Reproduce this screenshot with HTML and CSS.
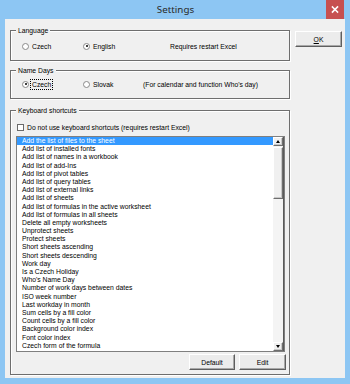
FILE: index.html
```html
<!DOCTYPE html>
<html>
<head>
<meta charset="utf-8">
<link rel="stylesheet" href="styles.css">
</head>
<body>
<div class="window">
  <div class="titlebar">
    <span class="title">Settings</span>
    <div class="close">
      <svg width="18" height="19" viewBox="0 0 18 19"><path d="M6.5 7 L11.5 12 M11.5 7 L6.5 12" stroke="#fff" stroke-width="1.6" stroke-linecap="square"/></svg>
    </div>
  </div>
  <div class="client">
    <div class="main">
      <div class="group g-lang">
        <span class="legend">Language</span>
        <div class="opts">
          <label class="opt w61"><span class="radio"></span><span>Czech</span></label>
          <label class="opt w87"><span class="radio on"></span><span>English</span></label>
          <span class="note">Requires restart Excel</span>
        </div>
      </div>
      <div class="group g-days">
        <span class="legend">Name Days</span>
        <div class="opts">
          <label class="opt w61"><span class="radio on"></span><span class="focus">Czech</span></label>
          <label class="opt w60"><span class="radio"></span><span>Slovak</span></label>
          <span class="note">(For calendar and function Who's day)</span>
        </div>
      </div>
      <div class="group g-keys">
        <span class="legend">Keyboard shortcuts</span>
        <label class="check-row"><span class="check"></span><span>Do not use keyboard shortcuts (requires restart Excel)</span></label>
        <div class="listbox">
          <div class="items">
            <div class="item sel">Add the list of files to the sheet</div>
            <div class="item">Add list of installed fonts</div>
            <div class="item">Add list of names in a workbook</div>
            <div class="item">Add list of add-Ins</div>
            <div class="item">Add list of pivot tables</div>
            <div class="item">Add list of query tables</div>
            <div class="item">Add list of external links</div>
            <div class="item">Add list of sheets</div>
            <div class="item">Add list of formulas in the active worksheet</div>
            <div class="item">Add list of formulas in all sheets</div>
            <div class="item">Delete all empty worksheets</div>
            <div class="item">Unprotect sheets</div>
            <div class="item">Protect sheets</div>
            <div class="item">Short sheets ascending</div>
            <div class="item">Short sheets descending</div>
            <div class="item">Work day</div>
            <div class="item">Is a Czech Holiday</div>
            <div class="item">Who's Name Day</div>
            <div class="item">Number of work days between dates</div>
            <div class="item">ISO week number</div>
            <div class="item">Last workday in month</div>
            <div class="item">Sum cells by a fill color</div>
            <div class="item">Count cells by a fill color</div>
            <div class="item">Background color index</div>
            <div class="item">Font color index</div>
            <div class="item">Czech form of the formula</div>
          </div>
          <div class="scrollbar">
            <div class="sbtn"><span class="arr up"></span></div>
            <div class="thumb"></div>
            <div class="track"></div>
            <div class="sbtn"><span class="arr down"></span></div>
          </div>
        </div>
        <div class="btn-row">
          <button class="btn w46">Default</button>
          <button class="btn w47">Edit</button>
        </div>
      </div>
    </div>
    <div class="side">
      <button class="btn ok w47"><u>O</u>K</button>
    </div>
  </div>
</div>
</body>
</html>
```

FILE: styles.css
```css
* { box-sizing: border-box; }
html, body { margin: 0; padding: 0; }
body {
  width: 350px;
  height: 384px;
  overflow: hidden;
  font-family: "Liberation Sans", Arial, sans-serif;
  font-size: 6.8px;
  color: #000;
}
.window {
  width: 350px;
  height: 384px;
  background: #8dc6f3;
  display: flex;
  flex-direction: column;
}
.titlebar {
  height: 19px;
  display: flex;
  align-items: center;
  justify-content: center;
  position: relative;
}
.title {
  font-family: "Noto Sans", "Open Sans", sans-serif;
  font-size: 9.8px;
  color: #2a2a2a;
  margin-left: 1px;
}
.close {
  position: absolute;
  left: 326px;
  top: 0;
  width: 18px;
  height: 19px;
  background: #c75050;
}
.close svg { display: block; }
.client {
  margin: 0 5px;
  height: 359px;
  background: #f0f0f0;
  display: flex;
}
.main {
  padding-left: 5px;
  width: 285px;
}
.side {
  padding-left: 5px;
  padding-top: 12px;
}
.group {
  position: relative;
  width: 280px;
  border: 1px solid #6e6e6e;
  box-shadow: inset 1px 1px 0 #fff, 1px 1px 0 #fff;
}
.legend {
  position: absolute;
  left: 5px;
  top: -5px;
  padding: 0 2px;
  background: #f0f0f0;
  line-height: 9px;
}
.g-lang { margin-top: 11px; height: 31px; padding: 10px 0 0 11px; }
.g-days { margin-top: 9px; height: 29px; padding: 8px 0 0 11px; }
.g-keys { margin-top: 11px; height: 265px; padding: 12px 0 0 5px; }
.opts {
  display: flex;
  align-items: center;
  height: 10px;
}
.opt {
  display: flex;
  align-items: center;
  flex: none;
}
.w61 { width: 61px; }
.w87 { width: 87px; }
.w60 { width: 60px; }
.w46 { width: 46px; }
.w47 { width: 47px; }
.radio {
  width: 7px;
  height: 7px;
  border-radius: 50%;
  border: 1px solid #8a8a8a;
  background: #fff;
  margin-right: 3px;
  position: relative;
  flex: none;
}
.radio.on::after {
  content: "";
  position: absolute;
  left: 1.5px;
  top: 1.5px;
  width: 2px;
  height: 2px;
  border-radius: 50%;
  background: #000;
}
.focus {
  outline: 1px dotted #000;
  outline-offset: 0;
  padding: 1px 1px;
  margin-left: -1px;
}
.check-row {
  display: flex;
  align-items: center;
  height: 9px;
  margin-left: 1px;
}
.check {
  width: 7px;
  height: 7px;
  border: 1px solid #6a6a6a;
  background: #fff;
  margin-right: 3px;
  flex: none;
}
.listbox {
  margin-top: 4px;
  width: 269px;
  height: 216px;
  border: 1px solid #7f7f7f;
  background: #fff;
  display: flex;
}
.items {
  flex: 1;
  overflow: hidden;
}
.item {
  height: 8.2px;
  line-height: 8.2px;
  padding-left: 5px;
  white-space: nowrap;
}
.item.sel {
  background: #3399ff;
  color: #fff;
}
.scrollbar {
  width: 11px;
  display: flex;
  flex-direction: column;
  background: #f4f4f4;
  border-right: 1px solid #5a5a5a;
}
.sbtn, .thumb {
  background: #f0f0f0;
  border: 1px solid;
  border-color: #fff #6e6e6e #6e6e6e #fff;
  box-shadow: inset -1px -1px 0 #c8c8c8;
}
.sbtn {
  height: 9px;
  display: flex;
  align-items: center;
  justify-content: center;
}
.thumb {
  height: 52px;
  margin-top: 1px;
}
.track { flex: 1; }
.arr {
  width: 0;
  height: 0;
  border-left: 2.5px solid transparent;
  border-right: 2.5px solid transparent;
}
.arr.up { border-bottom: 3px solid #000; }
.arr.down { border-top: 3px solid #000; }
.btn-row {
  display: flex;
  justify-content: flex-end;
  gap: 4px;
  width: 270px;
  margin-top: 2px;
}
.btn {
  height: 16px;
  padding: 0;
  font-family: "Liberation Sans", Arial, sans-serif;
  font-size: 6.8px;
  color: #000;
  background: #ececec;
  border: 1px solid;
  border-color: #fff #5f5f5f #5f5f5f #fff;
  box-shadow: inset -1px -1px 0 #a8a8a8;
}
.ok { height: 16px; }
```
